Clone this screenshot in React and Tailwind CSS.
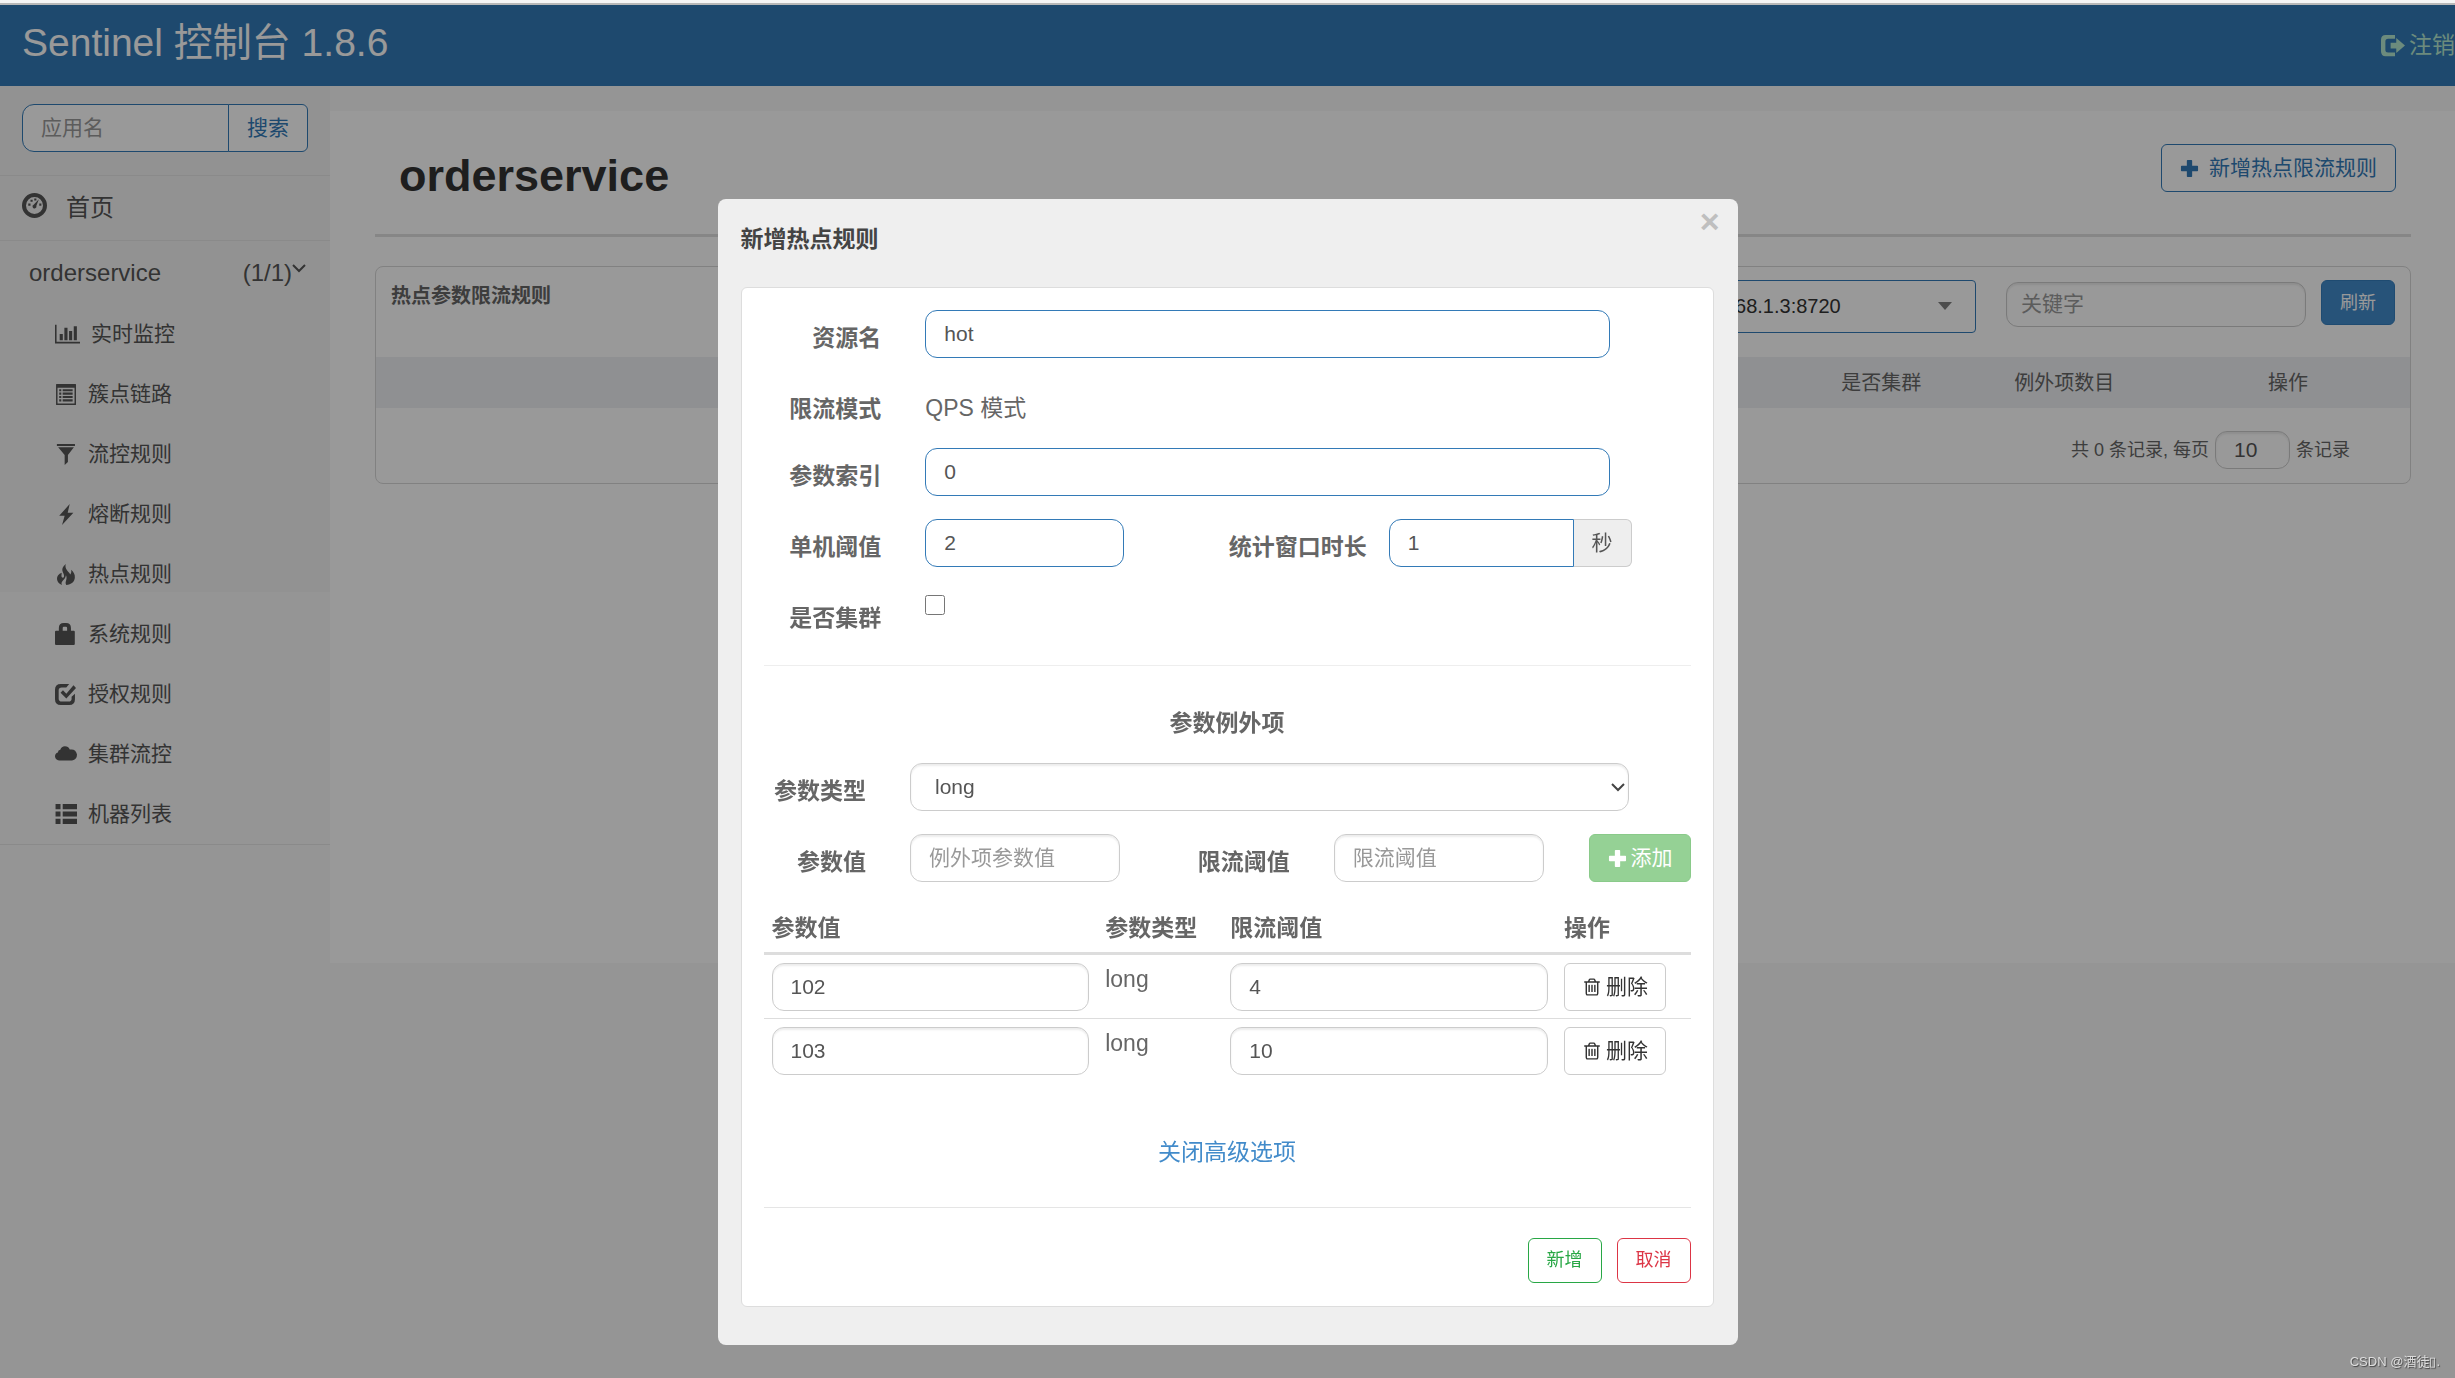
import React, { useState } from 'react'

const inputBase = "h-12 border bg-white px-[18px] text-[21px] text-[#555] outline-none placeholder:text-[#999]"
const blueInput = inputBase + " w-full rounded-xl border-[#337ab7]"
const grayInput = inputBase + " w-full rounded-xl border-[#ccc] shadow-[inset_0_2px_2px_rgba(0,0,0,0.075)]"
const labelClass = "block pt-3 text-right font-bold leading-8"

function Glyph({ size = 21, className = "", children }) {
  return (
    <svg width={ size } height={ size } viewBox="0 0 20 20" fill="currentColor" className={ "shrink-0 " + className } aria-hidden="true">
      { children }
    </svg>
  )
}

function PlusIcon({ size }) {
  return (
    <Glyph size={ size }>
      <path d="M8 1h4a.8.8 0 01.8.8v5.400h5.400a.8.8 0 01.8.8v4a.8.8 0 01-.8.8h-5.400v5.400a.8.8 0 01-.8.8H8a.8.8 0 01-.8-.8v-5.400H1.800A.8.8 0 011 12V8a.8.8 0 01.8-.8h5.400V1.800A.8.8 0 018 1z" />
    </Glyph>
  )
}

function TrashIcon() {
  return (
    <svg width="20" height="20" viewBox="0 0 1792 1792" fill="currentColor" aria-hidden="true">
      <path d="M704 736v576q0 14-9 23t-23 9h-64q-14 0-23-9t-9-23v-576q0-14 9-23t23-9h64q14 0 23 9t9 23zm256 0v576q0 14-9 23t-23 9h-64q-14 0-23-9t-9-23v-576q0-14 9-23t23-9h64q14 0 23 9t9 23zm256 0v576q0 14-9 23t-23 9h-64q-14 0-23-9t-9-23v-576q0-14 9-23t23-9h64q14 0 23 9t9 23zm128 724v-948h-896v948q0 22 7 40.5t14.5 27 10.5 8.5h832q3 0 10.5-8.5t14.500-27 7-40.500zm-672-1076h448l-48-117q-7-9-17-11h-317q-10 2-17 11zm928 32v64q0 14-9 23t-23 9h-96v948q0 83-47 143.500t-113 60.500h-832q-66 0-113-58.500t-47-141.500v-952h-96q-14 0-23-9t-9-23v-64q0-14 9-23t23-9h309l70-167q15-37 54-63t79-26h320q40 0 79 26t54 63l70 167h309q14 0 23 9t9 23z" />
    </svg>
  )
}

const menu = [
  {
    text: "实时监控",
    icon: (
      <svg width="25" height="22" viewBox="0 0 2048 1792" fill="currentColor" className="mr-[11px]" aria-hidden="true">
        <path d="M640 896v512h-256v-512h256zm384-512v1024h-256v-1024h256zm1024 1152v128h-2048v-1536h128v1408h1920zm-640-896v768h-256v-768h256zm384-384v1152h-256v-1152h256z" />
      </svg>
    )
  },
  {
    text: "簇点链路",
    icon: <Glyph className="mr-3"><path fillRule="evenodd" d="M1.500 0h18a.5.5 0 01.5.5v19a.5.5 0 01-.5.5h-18a.5.5 0 01-.5-.5V.5a.5.5 0 01.5-.5zm.9 3.500v15h16.200v-15zM4 5h2v2H4zm3.300 0h9.500v2H7.300zM4 8.200h2v2H4zm3.300 0h9.500v2H7.300zM4 11.400h2v2H4zm3.300 0h9.500v2H7.300zM4 14.600h2v2H4zm3.300 0h9.500v2H7.300z" /></Glyph>
  },
  {
    text: "流控规则",
    icon: <Glyph className="mr-3"><path d="M1.800 0H19v1.800H1.800zM3 3h15l-5.700 7.500v6.700L9.200 20v-9.500z" /></Glyph>
  },
  {
    text: "熔断规则",
    icon: <Glyph className="mr-3"><path d="M14 0L4 11.300h5.200L6.700 20 17.500 8.300h-5.400z" /></Glyph>
  },
  {
    text: "热点规则",
    icon: <Glyph className="mr-3"><path d="M10.300 0c-3.200 2.600-4 5-2.900 7.700.5 1.400 1.300 2.400 1.200 3.900-.1 1.300-1.200 1.900-2 1.100-.8-.9-.3-2.300-.2-4.400C3.500 9.500 1.700 11.600 1.900 14.200 2.100 17 4 19 6.700 20c-.8-1.400-.6-2.600.5-3.900 1.400-1.500 3-2.900 3.200-5.300.9 1.600.7 3.400.1 5.100-.4 1.200-.7 2.500.2 4.100 4.800-.4 8-3.200 8.200-7.200.2-2.700-1-5-3.500-7.300.3 2 .1 3.500-.9 4.400C13.200 7.300 8.700 4.600 10.300 0z" /></Glyph>
  },
  {
    text: "系统规则",
    icon: <Glyph size={ 22 } className="mr-[11px]"><path fillRule="evenodd" d="M3.500 7V4.500Q3.500 0 8 0h2q4.500 0 4.500 4.500V7H17a1 1 0 011 1v11a1 1 0 01-1 1H1a1 1 0 01-1-1V8a1 1 0 011-1zm3.500 0h4V4.500Q11 3.300 10 3.300H8Q7 3.300 7 4.500z" /></Glyph>
  },
  {
    text: "授权规则",
    icon: <Glyph className="mr-3"><path d="M5.500 0h8L10.800 3.300H6.500Q3.500 3.300 3.500 6V14Q3.500 16.700 6.500 16.700h6.500q2.800 0 2.800-2.700v-1.800l3.200-3V14.500Q19 20 13.500 20h-8Q0 20 0 14.500v-9Q0 0 5.500 0zM5.300 8.300l2.300-2.300 3.200 3.200L17.600 1.200l2.400 2.500-9.200 10z" /></Glyph>
  },
  {
    text: "集群流控",
    icon: <Glyph size={ 22 } className="mr-[11px]"><path d="M4.500 16A4.200 4.200 0 010 12.200Q0 9.500 2.600 8.600 2.800 6.500 4.800 6.200 5.800 3 9 3q3.200 0 4.400 3 5.600-1 6.600 4.500 0 4.500-4.500 5.500z" /></Glyph>
  },
  {
    text: "机器列表",
    icon: <Glyph size={ 22 } className="mr-[11px]"><path d="M.5 1H5v4.600H.5zM7 1h13v4.600H7zM.5 7.700H5v4.600H.5zM7 7.700h13v4.600H7zM.5 14.400H5V19H.5zM7 14.400h13V19H7z" /></Glyph>
  }
]

function Header() {
  return (
    <header className="flex h-[81px] items-center justify-between overflow-hidden bg-[#337ab7] pl-[22px] text-white">
      <a href="#" className="pb-[6px] text-[39px] leading-none">Sentinel 控制台 1.8.6</a>
      <a href="#" className="flex items-center gap-1 whitespace-nowrap text-[23px] text-[#b5e8d0]">
        <Glyph size={ 25 }>
          <path d="M4.500 1.500H12v3H6.500Q4.300 4.500 4.300 6.500v7q0 2 2.200 2H12v3H4.500Q.8 18.500.8 14.500v-9Q.8 1.500 4.500 1.500zM13 4l7 6-7 6v-3.700H8.500V7.700H13z" />
        </Glyph>
        注销
      </a>
    </header>
  )
}

function Sidebar() {
  return (
    <nav className="w-[330px] shrink-0 text-[#555]">
      <div className="bg-[#f4f4f4]">
        <div className="flex px-[22px] pt-[18px] pb-[23px]">
          <input type="text" placeholder="应用名" aria-label="应用名" className={ inputBase + " w-[207px] rounded-l-xl border-[#337ab7]" } />
          <button className="-ml-px h-12 flex-1 rounded-r-md border border-[#337ab7] bg-white text-[21px] text-[#337ab7]">搜索</button>
        </div>
        <a href="#" className="flex h-[65px] items-center border-t border-[#e7e7e7] pl-[22px] text-2xl">
          <Glyph size={ 25 } className="mr-[19px] mb-[6px]">
            <path fillRule="evenodd" d="M10 0a10 10 0 110 20 10 10 0 010-20zm0 3.200a6.800 6.800 0 100 13.600 6.800 6.800 0 000-13.600z" />
            <path d="M13.500 5l-2 5.200a1.600 1.600 0 11-2.200-.9zM5 8.300h1.800v1.800H5zM6.800 5.300h1.700V7H6.800zM9.800 4.300h1.700V6H9.800zM13.800 8.300h1.700v1.800h-1.700z" />
          </Glyph>
          首页
        </a>
      </div>
      <div className="border-y border-[#e7e7e7] bg-[linear-gradient(#f4f4f4_351px,transparent_351px)]">
        <a href="#" className="flex h-[63px] items-center justify-between pr-6 pl-[29px] text-2xl">
          <span>orderservice</span>
          <span className="flex items-center">
            (1/1)
            <svg width="14" height="9" viewBox="0 0 14 9" fill="none" stroke="currentColor" strokeWidth="2" className="mb-2" aria-hidden="true">
              <path d="M1 1l6 6 6-6" />
            </svg>
          </span>
        </a>
        <ul>
          { menu.map(({ text, icon }) => (
            <li key={ text }>
              <a href="#" className="flex h-[60px] items-center pl-[55px] text-[21px]">{ icon }{ text }</a>
            </li>
          )) }
        </ul>
      </div>
    </nav>
  )
}

function RuleList() {
  return (
    <main className="mt-[25px] min-h-[852px] min-w-0 flex-1 bg-white pr-11 pl-[45px]">
      <div className="flex h-[126px] items-start justify-between border-b-[3px] border-[#dfdfdf] pt-[33px] pr-[15px] pl-6">
        <h1 className="pt-[9px] text-[45px] leading-none font-bold text-[#333]">orderservice</h1>
        <button className="flex h-12 items-center gap-[10px] rounded-md border border-[#337ab7] px-[18px] text-[21px] text-[#337ab7]">
          <PlusIcon size={ 19 } />新增热点限流规则
        </button>
      </div>
      <section className="mt-[29px] rounded-lg border border-[#d8d8d8] text-[#666]">
        <div className="flex h-[90px] items-start justify-between pt-[13px] pr-[15px] pl-[15px]">
          <h2 className="text-xl leading-8 font-bold">热点参数限流规则</h2>
          <div className="flex items-start">
            <div className="relative mr-[30px]">
              <select aria-label="机器" className="h-[53px] w-[306px] appearance-none rounded-[4px] border border-[#337ab7] bg-white pb-[2px] pl-[14px] text-xl text-[#333]">
                <option>192.168.1.3:8720</option>
              </select>
              <svg width="14" height="8" viewBox="0 0 14 8" fill="#808080" className="pointer-events-none absolute top-[22px] right-6" aria-hidden="true"><path d="M0 0h14L7 8z" /></svg>
            </div>
            <input type="text" placeholder="关键字" aria-label="关键字" className="mt-[2px] mr-[15px] h-[45px] w-[300px] rounded-xl border border-[#ccc] bg-white px-[14px] pb-[2px] text-[21px] shadow-[inset_0_2px_2px_rgba(0,0,0,0.075)] placeholder:text-[#999]" />
            <button className="h-[45px] w-[74px] rounded-md border border-[#357ebd] bg-[#428bca] text-lg text-white">刷新</button>
          </div>
        </div>
        <table className="w-full table-fixed text-xl">
          <thead>
            <tr className="h-[51px] bg-[#eff1f4]">
              <td className="w-[70%]" />
              <th className="w-[8%] font-normal">是否集群</th>
              <th className="w-[10%] font-normal">例外项数目</th>
              <th className="w-[12%] font-normal">操作</th>
            </tr>
          </thead>
        </table>
        <div className="flex h-[75px] items-center justify-end gap-[6px] pt-2 pr-[60px] text-lg">
          <span>共 0 条记录, 每页</span>
          <input type="text" defaultValue="10" aria-label="每页条数" className="h-[38px] w-[75px] rounded-xl border border-[#ccc] bg-white px-[18px] text-[21px] text-[#555] shadow-[inset_0_2px_2px_rgba(0,0,0,0.075)]" />
          <span>条记录</span>
        </div>
      </section>
    </main>
  )
}

function ExceptionTable({ items }) {
  return (
    <table className="w-full table-fixed text-left align-top">
      <thead>
        <tr className="border-b-[3px] border-[#ddd]">
          <th className="w-[36%] px-2 py-[7px] leading-[33px]">参数值</th>
          <th className="w-[13.5%] px-2 py-[7px] leading-[33px]">参数类型</th>
          <th className="w-[36%] px-2 py-[7px] leading-[33px]">限流阈值</th>
          <th className="px-2 py-[7px] leading-[33px]">操作</th>
        </tr>
      </thead>
      <tbody>
        { items.map((item) => (
          <tr key={ item.value } className="border-b border-[#ddd] align-top last:border-b-0">
            <td className="px-2 pt-2 pb-[7px]"><input type="text" defaultValue={ item.value } aria-label="参数值" className={ grayInput } /></td>
            <td className="px-2 pt-2 pb-[7px] leading-[33px]">{ item.type }</td>
            <td className="px-2 pt-2 pb-[7px]"><input type="text" defaultValue={ item.count } aria-label="限流阈值" className={ grayInput } /></td>
            <td className="px-2 pt-2 pb-[7px]">
              <button className="flex h-12 w-[102px] items-center justify-center gap-1 rounded-md border border-[#ccc] bg-white text-[21px] text-[#333]">
                <TrashIcon />删除
              </button>
            </td>
          </tr>
        )) }
      </tbody>
    </table>
  )
}

function RuleDialog({ onClose }) {
  const items = [
    { value: "102", type: "long", count: "4" },
    { value: "103", type: "long", count: "10" }
  ]

  return (
    <div role="dialog" aria-labelledby="dialog-title" className="w-[1020px] max-w-full rounded-lg bg-[#efefef] pr-6 pb-[38px] pl-[23px] text-[23px] text-[#666]">
      <div className="flex h-[88px] items-start justify-between">
        <h2 id="dialog-title" className="pt-6 leading-[33px] font-bold text-[#444]">新增热点规则</h2>
        <button aria-label="关闭" onClick={ onClose } className="-mr-[6px] pt-[2px] text-[34px] leading-10 font-bold text-[#bfbfbf]">×</button>
      </div>
      <form className="rounded-md border border-[#ddd] bg-white" onSubmit={ (e) => e.preventDefault() }>
        <div className="flex flex-col gap-[23px] pt-[22px]">
          <div className="grid grid-cols-12">
            <label htmlFor="resource" className={ labelClass + " col-span-2 pr-[22px]" }>资源名</label>
            <div className="col-span-9 px-[22px]"><input id="resource" type="text" defaultValue="hot" className={ blueInput } /></div>
          </div>
          <div className="grid grid-cols-12">
            <span className={ labelClass + " col-span-2 pr-[22px]" }>限流模式</span>
            <p className="col-span-9 px-[22px] pt-[11px] leading-[33px]">QPS 模式</p>
          </div>
          <div className="grid grid-cols-12">
            <label htmlFor="index" className={ labelClass + " col-span-2 pr-[22px]" }>参数索引</label>
            <div className="col-span-9 px-[22px]"><input id="index" type="text" defaultValue="0" className={ blueInput } /></div>
          </div>
          <div className="grid grid-cols-12">
            <label htmlFor="threshold" className={ labelClass + " col-span-2 pr-[22px]" }>单机阈值</label>
            <div className="col-span-3 px-[22px]"><input id="threshold" type="text" defaultValue="2" className={ blueInput } /></div>
            <label htmlFor="duration" className={ labelClass + " col-span-3 pr-[22px]" }>统计窗口时长</label>
            <div className="col-span-3 flex">
              <input id="duration" type="text" defaultValue="1" className={ inputBase + " min-w-0 flex-1 rounded-l-xl border-[#337ab7]" } />
              <span className="flex h-12 w-[58px] items-center justify-center rounded-r-md border border-l-0 border-[#ccc] bg-[#eee] text-[21px] text-[#555]">秒</span>
            </div>
          </div>
          <div className="grid grid-cols-12">
            <label htmlFor="cluster" className={ labelClass + " col-span-2 pr-[22px]" }>是否集群</label>
            <div className="col-span-9 px-[22px] pt-[5px]"><input id="cluster" type="checkbox" className="block size-5" /></div>
          </div>
        </div>

        <hr className="mx-[22px] mt-[31px] border-[#eee]" />
        <h3 className="pt-[41px] pb-[23px] text-center leading-[33px] font-bold">参数例外项</h3>

        <div className="-mx-[23px] mb-[23px] grid grid-cols-12">
          <label htmlFor="type" className={ labelClass + " col-span-2 pr-[22px]" }>参数类型</label>
          <div className="relative col-span-9 px-[22px]">
            <select id="type" className={ inputBase + " w-full appearance-none rounded-xl border-[#ccc] pl-6 shadow-[inset_0_2px_2px_rgba(0,0,0,0.075)]" }>
              <option>long</option>
              <option>int</option>
              <option>String</option>
            </select>
            <svg width="14" height="9" viewBox="0 0 14 9" fill="none" stroke="#444" strokeWidth="2" className="pointer-events-none absolute top-5 right-[26px]" aria-hidden="true">
              <path d="M1 1l6 6 6-6" />
            </svg>
          </div>
        </div>
        <div className="-mx-[23px] mb-[23px] grid grid-cols-12">
          <label htmlFor="value" className={ labelClass + " col-span-2 pr-[22px]" }>参数值</label>
          <div className="col-span-3 px-[22px]"><input id="value" type="text" placeholder="例外项参数值" className={ grayInput } /></div>
          <label htmlFor="count" className={ labelClass + " col-span-2 pr-[22px]" }>限流阈值</label>
          <div className="col-span-3 px-[22px]"><input id="count" type="text" placeholder="限流阈值" className={ grayInput } /></div>
          <div className="col-span-2 pl-[23px]">
            <button className="flex h-12 w-[102px] items-center justify-center gap-1 rounded-md border border-[#4cae4c] bg-[#5cb85c] text-[21px] text-white opacity-65">
              <PlusIcon size={ 19 } />添加
            </button>
          </div>
        </div>

        <div className="px-[22px]">
          <ExceptionTable items={ items } />
          <div className="border-b border-[#e5e5e5] pt-[53px] pb-[37px] text-center">
            <a href="#" className="leading-[33px] text-[#428bca]">关闭高级选项</a>
          </div>
          <div className="flex justify-end gap-[15px] pt-[30px] pb-[23px]">
            <button className="h-[45px] w-[74px] rounded-md border border-[#28a745] text-lg text-[#28a745]">新增</button>
            <button onClick={ onClose } className="h-[45px] w-[74px] rounded-md border border-[#dc3545] text-lg text-[#dc3545]">取消</button>
          </div>
        </div>
      </form>
    </div>
  )
}

function App() {
  const [ open, setOpen ] = useState(true)

  return (
    <div className="min-h-screen bg-[#f8f8f8] font-['Liberation_Sans','Noto_Sans_CJK_SC',sans-serif]">
      <div className="h-[5px] border-b-2 border-[#b8b8b8] bg-[#f5f5f5]" />
      <Header />
      <div className="flex">
        <Sidebar />
        <RuleList />
      </div>
      { open && (
        <div className="fixed inset-x-0 top-[5px] bottom-0 flex items-start justify-center bg-black/40 pt-[194px]">
          <RuleDialog onClose={ () => setOpen(false) } />
        </div>
      ) }
      <div className="fixed right-[15px] bottom-[7px] text-[13px] text-[#ddd] [text-shadow:1px_1px_1px_#444]">CSDN @酒徒▯.</div>
    </div>
  )
}

export default App
